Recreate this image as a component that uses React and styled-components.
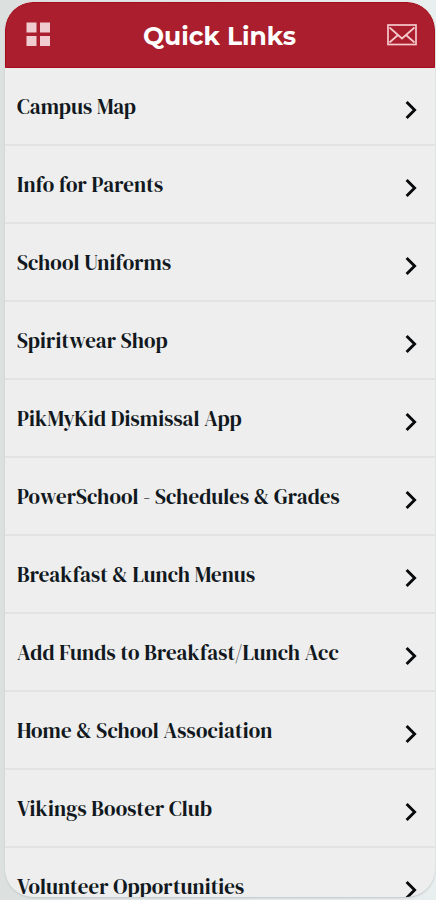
import styled, { createGlobalStyle } from 'styled-components';

const links = [
    'Campus Map',
    'Info for Parents',
    'School Uniforms',
    'Spiritwear Shop',
    'PikMyKid Dismissal App',
    'PowerSchool - Schedules & Grades',
    'Breakfast & Lunch Menus',
    'Add Funds to Breakfast/Lunch Acc',
    'Home & School Association',
    'Vikings Booster Club',
    'Volunteer Opportunities',
];

export default function App() {
    return (
        <>
        <GlobalStyle />
        <Screen>
        <Panel>
        <Header>
        <IconButton aria-label="Menu">
        <GridIcon />
        </IconButton>
        <Title>Quick Links</Title>
        <IconButton aria-label="Messages">
        <MailIcon />
        </IconButton>
        </Header>
        <List>
        {links.map((label) => (
            <Row key={label}>
            <Label>{label}</Label>
            <Chevron />
            </Row>
        ))}
        </List>
        </Panel>
        </Screen>
        </>
    )
}

function GridIcon() {
    return (
        <svg width="26" height="26" viewBox="0 0 26 26" fill="#f0cbd0">
        <rect x="0.5" y="0.5" width="10" height="10" />
        <rect x="14" y="0.5" width="10" height="10" />
        <rect x="0.5" y="14" width="10" height="10" />
        <rect x="14" y="14" width="10" height="10" />
        </svg>
    )
}

function MailIcon() {
    return (
        <svg width="30" height="22" viewBox="0 0 30 22" fill="none" stroke="#f6c9cc" strokeWidth="1.7">
        <rect x="1" y="1" width="28" height="19.5" />
        <path d="M2.5 3.5 L15 14.5 L27.5 3.5" />
        <path d="M2.5 18.5 L11 11 M27.5 18.5 L19 11" />
        </svg>
    )
}

function Chevron() {
    return (
        <svg width="12" height="20" viewBox="0 0 12 20" fill="none" stroke="#080a0c" strokeWidth="2.9">
        <path d="M1.6 2 L9.6 10 L1.6 18" />
        </svg>
    )
}

const GlobalStyle = createGlobalStyle`
    * {
        box-sizing: border-box;
    }

    body {
        background: #dfe4e4;
        margin: 0;
    }
`

const Screen = styled.main`
    background: linear-gradient(90deg, #dce1e0, #e9eeef);
    height: 900px;
    overflow: hidden;
    padding: 2px 1px 3px 5px;
`

const Panel = styled.section`
    background-color: #eeeeee;
    border-radius: 28px;
    box-shadow: 0 1px 2px #bfc6c8;
    height: 895px;
    overflow: hidden;
`

const Header = styled.header`
    align-items: center;
    background-color: #aa1e2d;
    border: 1px solid #a50d1b;
    border-radius: 28px 28px 0 0;
    display: flex;
    height: 66px;
    justify-content: space-between;
    padding: 0 17px 0 20px;
`

const IconButton = styled.button`
    background: none;
    border: none;
    display: flex;
    padding: 0;
`

const Title = styled.h1`
    color: #ffffff;
    font-family: 'Montserrat', 'Inter', 'Liberation Sans', sans-serif;
    font-size: 25px;
    font-weight: 700;
    line-height: 30px;
    margin: 1px 0 0;
`

const List = styled.ul`
    list-style: none;
    margin: 0;
    padding: 0;
`

const Row = styled.li`
    align-items: center;
    border-bottom: 2px solid #e2e4e4;
    display: flex;
    height: 78px;
    justify-content: space-between;
    padding: 8px 18px 0 12px;
`

const Label = styled.span`
    color: #111820;
    font-family: 'DM Serif Display', 'Liberation Serif', serif;
    font-size: 21px;
    font-weight: 400;
    letter-spacing: 0.1px;
    line-height: 26px;
    margin-bottom: 7px;
    white-space: nowrap;
`
